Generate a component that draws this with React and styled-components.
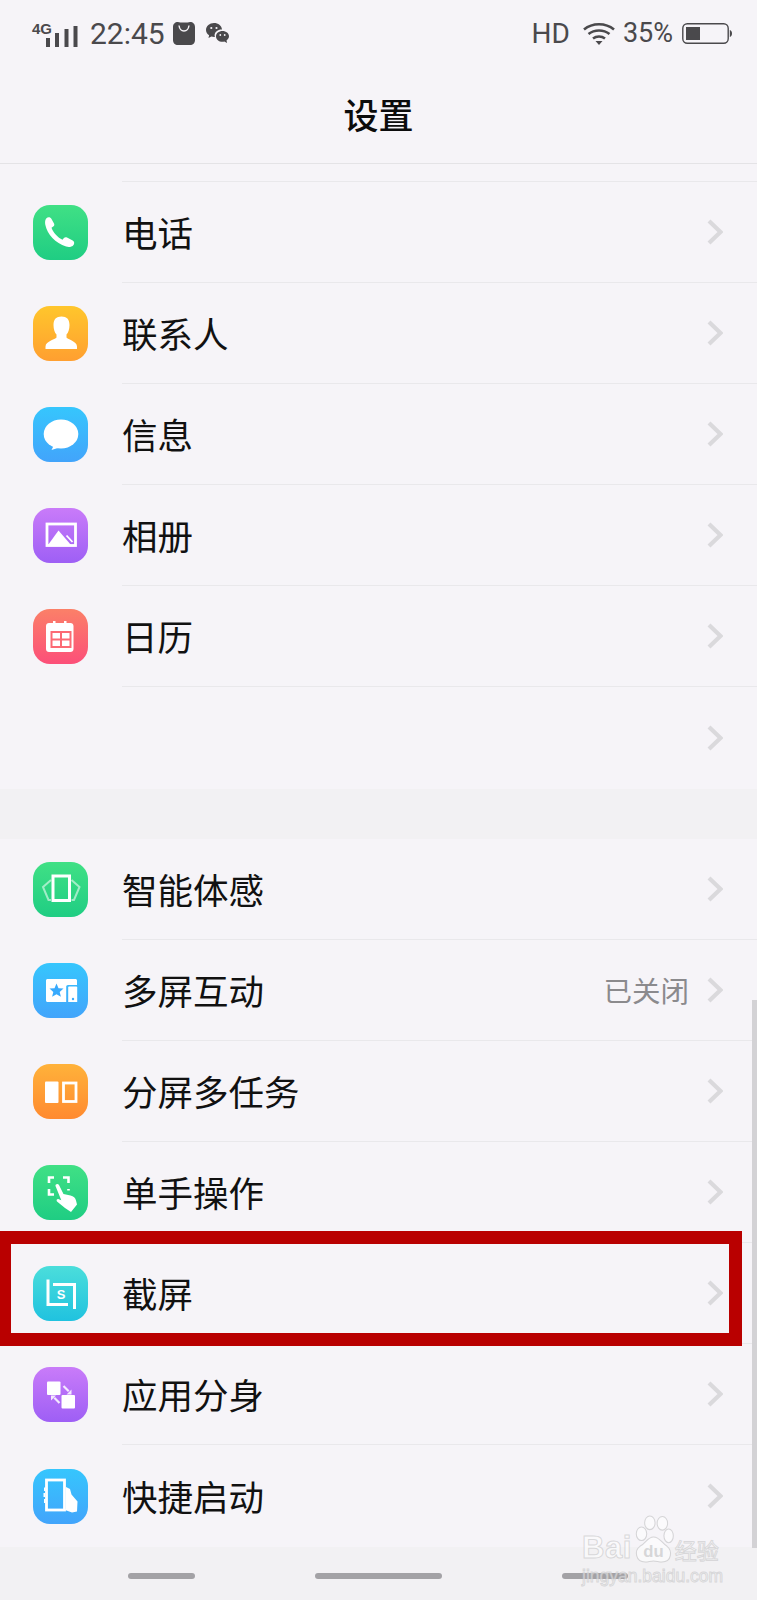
import React from "react";
import styled, { createGlobalStyle } from "styled-components";

const GlobalStyle = createGlobalStyle`
  html, body {
    margin: 0;
    padding: 0;
    background: #f6f4f8;
  }
  * {
    box-sizing: border-box;
  }
`;

const Page = styled.div`
  position: relative;
  width: 757px;
  height: 1600px;
  overflow: hidden;
  background: #f6f4f8;
  font-family: "Noto Sans CJK SC", "Noto Sans", sans-serif;
  color: #111;
`;

const StatusBar = styled.div`
  height: 66px;
  padding: 20px 25px 0 32px;
  display: flex;
  justify-content: space-between;
  align-items: flex-start;
  color: #4a494c;
  font-family: Roboto, "Liberation Sans", sans-serif;
`;

const StatusGroup = styled.div`
  display: flex;
  align-items: center;
  height: 27px;
`;

const Signal = styled.div`
  display: flex;
  align-items: flex-end;
  height: 24px;
  margin-top: 3px;
`;

const FourGLabel = styled.span`
  align-self: flex-start;
  width: 14px;
  font-family: "Liberation Sans", sans-serif;
  font-size: 15px;
  font-weight: 700;
  line-height: 11px;
  white-space: nowrap;
`;

const Clock = styled.span`
  font-size: 30px;
  line-height: 27px;
  margin: 0 8px 0 12px;
`;

const Network = styled.span`
  font-size: 28px;
  line-height: 27px;
`;

const Percent = styled.span`
  font-size: 27px;
  line-height: 27px;
  margin: 0 9px 0 8px;
`;

const Drawing = styled.svg`
  display: block;
  flex: none;
  margin-left: ${(p) => p.$ml || 0}px;
`;

const TitleBar = styled.div`
  height: 98px;
  padding-bottom: 2px;
  display: flex;
  align-items: center;
  justify-content: center;
  border-bottom: 1px solid #e4e3e6;
  font-size: 35px;
  font-weight: 500;
  color: #0c0c0c;
`;

const Stub = styled.div`
  height: 18px;
  margin-left: 122px;
  border-bottom: 1px solid #e9e8eb;
`;

const Row = styled.div`
  height: ${(p) => (p.$last ? 102 : 101)}px;
  display: flex;
  align-items: center;
  padding-left: 33px;
`;

const IconSlot = styled.div`
  width: 55px;
  height: 55px;
  flex: none;
  margin-right: 34px;
  border-radius: 17px;
  background: ${(p) => p.$bg || "transparent"};
  svg {
    display: block;
  }
`;

const RowBody = styled.div`
  flex: 1;
  height: 100%;
  display: flex;
  align-items: center;
  padding-right: 34px;
  border-bottom: ${(p) => (p.$last ? "none" : "1px solid #e9e8eb")};
`;

const Label = styled.div`
  flex: 1;
  font-size: 35.5px;
  line-height: 40px;
  color: #111;
`;

const Value = styled.div`
  font-size: 28.5px;
  line-height: 40px;
  color: #8b8a8d;
  margin-right: 18px;
`;

const Band = styled.div`
  height: 50px;
  background: #f2f1f3;
`;

const BottomBar = styled.div`
  height: 53px;
  background: #f2f1f3;
  padding: 26px 129px 0 128px;
  display: flex;
  justify-content: space-between;
  align-items: flex-start;
`;

const Pill = styled.div`
  width: ${(p) => p.$w}px;
  height: 6px;
  border-radius: 3px;
  background: #a3a2a5;
`;

const Scrollbar = styled.div`
  position: absolute;
  right: 0;
  top: 1000px;
  width: 5px;
  height: 548px;
  background: #d3d2d5;
`;

const Highlight = styled.div`
  position: absolute;
  left: 0;
  top: 1231px;
  width: 742px;
  height: 115px;
  border: 13px solid #b90000;
  border-left-width: 11px;
`;

const Watermark = styled.div`
  position: absolute;
  left: 582px;
  top: 1515px;
  font-family: "Liberation Sans", Arial, sans-serif;
  color: rgba(255, 255, 255, 0.55);
  -webkit-text-stroke: 1px rgba(190, 190, 192, 0.55);
  white-space: nowrap;
`;

const Wordmark = styled.div`
  display: flex;
  align-items: flex-end;
  height: 48px;
`;

const Bai = styled.span`
  font-size: 31px;
  line-height: 30px;
  font-weight: 700;
  letter-spacing: 0.5px;
`;

const Jingyan = styled.span`
  flex: none;
  font-family: "Noto Sans CJK SC", sans-serif;
  font-size: 22px;
  line-height: 28px;
`;

const Url = styled.div`
  margin-top: 3px;
  font-size: 17.5px;
  line-height: 20px;
`;

const Chevron = () => (
  <Drawing width="16" height="26" viewBox="0 0 16 26">
    <path d="M2 2l11.5 11L2 24" fill="none" stroke="#dad9dc" strokeWidth="4.2" />
  </Drawing>
);

const Glyph = ({ children }) => (
  <svg width="55" height="55" viewBox="0 0 55 55" fill="#fff">
    {children}
  </svg>
);

const icons = {
  phone: (
    <Glyph>
      <path d="M13.200 13.500c1.800-1.800 4.300-1.400 5.300.5l2.500 4.600c.6 1.100.3 2.300-.8 3l-1.700 1.100c1.900 5.100 6.300 9.800 11 12l1.400-1.600c.8-1 2-1.200 3.100-.6l5.700 3.100c1.900 1.100 2 3.500.4 4.800-1.700 1.500-4.300 1.900-7 1C22.500 38.400 14.200 29.500 12.300 19.800c-.4-2.400-.3-4.800.9-6.300z" />
    </Glyph>
  ),
  contact: (
    <Glyph>
      <path d="M28.500 10.500c5.200 0 8 2.800 8 8.500 0 4.200-1.300 7.800-3 9.500v3c0 1.500 10.500 3.500 10.500 9v2.500H12.500V40.500c0-5.500 11-7.500 11-9v-3c-1.700-1.700-3-5.300-3-9.500 0-5.700 2.800-8.500 8-8.500z" />
    </Glyph>
  ),
  message: (
    <Glyph>
      <ellipse cx="28" cy="27" rx="17.300" ry="14.500" />
      <path d="M21 38l-2.500 5 8-2.500z" />
    </Glyph>
  ),
  album: (
    <Glyph>
      <rect x="14" y="16" width="28.500" height="21.500" fill="none" stroke="#fff" strokeWidth="2.800" />
      <path d="M15 37l10.500-14.500L38 37z" />
      <path d="M33.500 27.500l6 6.500" stroke="#fff" strokeWidth="1.800" />
    </Glyph>
  ),
  calendar: (
    <Glyph>
      <path d="M13 17c0-1.700 1.300-3 3-3h4v-2h2.500v2h8.500v-2h2.500v2h4c1.700 0 3 1.300 3 3v23c0 1.700-1.300 3-3 3H16c-1.700 0-3-1.300-3-3z" />
      <path d="M17.500 22h21v17h-21z" fill="#fc6a74" />
      <path d="M19.500 24h7.500v5.500h-7.500zM29 24h7.500v5.500H29zM19.500 31.500h7.500V37h-7.500zM29 31.500h7.500V37H29z" />
    </Glyph>
  ),
  motion: (
    <Glyph>
      <path d="M18 18l-8 7 5.500 13H18M38.500 18l8 7-5.500 13h-2.500" fill="none" stroke="#fff" strokeOpacity=".55" strokeWidth="2" />
      <rect x="20" y="14" width="16.500" height="24.500" fill="none" stroke="#fff" strokeWidth="3" />
    </Glyph>
  ),
  multi: (
    <Glyph>
      <path d="M13 17.500c0-.800.700-1.500 1.500-1.500h28c.800 0 1.500.700 1.500 1.500v4.500h-9c-1 0-1.800.800-1.800 1.800V39H14.500c-.800 0-1.500-.700-1.500-1.500z" />
      <path d="M35.200 24.500c0-.500.400-1 1-1H43.500c.300 0 .700.400.700 1V39h-9z" />
      <path d="M23.500 20.500l2 4.700 5 .4-3.800 3.300 1.200 4.900-4.400-2.600-4.400 2.600 1.200-4.900-3.800-3.300 5-.4z" fill="#38aafd" />
      <circle cx="40" cy="36" r="1.200" fill="#38aafd" />
    </Glyph>
  ),
  split: (
    <Glyph>
      <rect x="12" y="17.500" width="13.500" height="21.500" rx="1" />
      <rect x="30.500" y="19" width="12.500" height="18.500" fill="none" stroke="#fff" strokeWidth="2.800" />
    </Glyph>
  ),
  onehand: (
    <Glyph>
      <path d="M21 12.500h-5v5.500M30 12.500h5.500v5.500M16 24v5.500h5M35.500 24v1.500" fill="none" stroke="#fff" strokeWidth="2.600" />
      <path d="M22.500 21c-.5-2 2.500-3 3.500-1l4.500 9 7 1.500c3 .7 5 2.500 5.500 5l1 4-6 7.500-6-4-8-6.500c-1-1.200 0-3 1.800-2.300l2.500 1z" />
    </Glyph>
  ),
  screenshot: (
    <Glyph>
      <path d="M15 13.500V38.500H35" fill="none" stroke="#fff" strokeWidth="3" />
      <path d="M20 18.500h21.500V43" fill="none" stroke="#fff" strokeWidth="3" />
      <text x="28" y="33" textAnchor="middle" fontSize="13" fontWeight="700" fontFamily="Liberation Sans, sans-serif">
        S
      </text>
    </Glyph>
  ),
  clone: (
    <Glyph>
      <rect x="14" y="14.500" width="13.500" height="13.500" rx="1" />
      <rect x="28.500" y="28" width="13.500" height="13.500" rx="1" />
      <path d="M30.500 19l5.200 5.200" stroke="#fff" strokeOpacity=".85" strokeWidth="2.200" />
      <path d="M38.500 27.500v-5l-5 5zM18 28.500v5l5-5z" fillOpacity=".85" />
      <path d="M26.500 36l-5.200-5.200" stroke="#fff" strokeOpacity=".85" strokeWidth="2.200" />
    </Glyph>
  ),
  quick: (
    <Glyph>
      <rect x="13.500" y="11" width="18" height="30" fill="none" stroke="#fff" strokeWidth="2.800" />
      <path d="M33 18l4 2 1.500 5.500 6 7-.5 10-5 1-7-2.500-1.500-.5H33zM11 18.500h1.500V22H11zM10.500 24H12v4h-1.500zM11 30h1.500v4H11z" />
    </Glyph>
  ),
};

const gradients = {
  green: "linear-gradient(#40e085, #1fcd83)",
  amber: "linear-gradient(#ffc62c, #ff9f30)",
  blue: "linear-gradient(#36c6fd, #42a4fb)",
  purple: "linear-gradient(#c97bf9, #9e5ff5)",
  rose: "linear-gradient(#fb8068, #fc4f79)",
  orange: "linear-gradient(#ffb23a, #ff8a30)",
  teal: "linear-gradient(#4bdedb, #20c2df)",
};

const firstSection = [
  { label: "电话", icon: "phone", bg: gradients.green },
  { label: "联系人", icon: "contact", bg: gradients.amber },
  { label: "信息", icon: "message", bg: gradients.blue },
  { label: "相册", icon: "album", bg: gradients.purple },
  { label: "日历", icon: "calendar", bg: gradients.rose },
  { label: "" },
];

const secondSection = [
  { label: "智能体感", icon: "motion", bg: gradients.green },
  { label: "多屏互动", icon: "multi", bg: gradients.blue, value: "已关闭" },
  { label: "分屏多任务", icon: "split", bg: gradients.orange },
  { label: "单手操作", icon: "onehand", bg: gradients.green },
  { label: "截屏", icon: "screenshot", bg: gradients.teal },
  { label: "应用分身", icon: "clone", bg: gradients.purple },
  { label: "快捷启动", icon: "quick", bg: gradients.blue },
];

function SettingsRow({ item, last }) {
  return (
    <Row $last={last}>
      <IconSlot $bg={item.bg}>{item.icon && icons[item.icon]}</IconSlot>
      <RowBody $last={last}>
        <Label>{item.label}</Label>
        {item.value && <Value>{item.value}</Value>}
        <Chevron />
      </RowBody>
    </Row>
  );
}

function Section({ items }) {
  return items.map((item, i) => <SettingsRow key={i} item={item} last={i === items.length - 1} />);
}

const SignalBars = () => (
  <Drawing width="32" height="21" viewBox="0 0 32 21">
    <path d="M0 12h4v9H0zM9 7h4v14H9zM18.500 3h4v18h-4zM27.500 0h4v21h-4z" fill="#4a494c" />
  </Drawing>
);

const BagIcon = () => (
  <Drawing width="22" height="23" viewBox="0 0 22 23">
    <path d="M5 0c2 .8 10 .8 12 0 3 0 5 2 5 5v13c0 3-2 5-5 5H5c-3 0-5-2-5-5V5c0-3 2-5 5-5z" fill="#4a494c" />
    <path d="M6 3.500c.5 3.500 2.500 5.500 5 5.500s4.500-2 5-5.500" fill="none" stroke="#f6f4f8" strokeWidth="1.400" />
  </Drawing>
);

const WeChatIcon = () => (
  <Drawing $ml={11} width="23" height="22" viewBox="0 0 23 22">
    <path d="M8 0c4.200 0 7.600 2.700 8 6.400-3.900-.2-7.400 2.300-7.400 5.900 0 .6.100 1.100.3 1.700-1.300.1-2.400 0-3.500-.4L2.500 15l.6-2.800C1.200 11 0 9.100 0 7c0-3.900 3.600-7 8-7z" fill="#4a494c" />
    <path d="M16.500 8c3.600 0 6.500 2.300 6.500 5.200 0 1.700-1 3.200-2.500 4.200l.6 2.600-2.800-1.500c-.6.100-1.200.2-1.800.2-3.600 0-6.500-2.300-6.500-5.300S12.900 8 16.500 8z" fill="#4a494c" />
    <circle cx="5.300" cy="5" r="1.100" fill="#f6f4f8" />
    <circle cx="10.500" cy="5" r="1.100" fill="#f6f4f8" />
    <circle cx="14.300" cy="12" r=".9" fill="#f6f4f8" />
    <circle cx="18.700" cy="12" r=".9" fill="#f6f4f8" />
  </Drawing>
);

const WifiIcon = () => (
  <Drawing $ml={13} width="32" height="23" viewBox="0 0 32 23">
    <g fill="none" stroke="#4a494c" strokeWidth="2.600">
      <path d="M1 7.500C9.500.5 22.500.5 31 7.500" />
      <path d="M5.500 12C11.500 7.300 20.500 7.300 26.500 12" />
      <path d="M10 16.500c3.500-2.700 8.500-2.700 12 0" />
    </g>
    <path d="M12.500 19h7L16 23z" fill="#4a494c" />
  </Drawing>
);

const BatteryIcon = () => (
  <Drawing width="50" height="21" viewBox="0 0 50 21">
    <rect x=".8" y=".8" width="45.400" height="19.400" rx="4.500" fill="none" stroke="#4a494c" strokeWidth="1.400" />
    <rect x="4" y="4" width="14" height="13" fill="#4a494c" />
    <path d="M47.800 7c1.400.5 2.200 1.900 2.200 3.500s-.8 3-2.200 3.500z" fill="#4a494c" />
  </Drawing>
);

const Paw = () => (
  <Drawing width="43" height="48" viewBox="0 0 39 46">
    <g fill="rgba(255,255,255,0.55)" stroke="rgba(190,190,192,0.6)">
      <ellipse cx="8" cy="18" rx="5" ry="6.500" />
      <ellipse cx="16" cy="7.500" rx="5" ry="6.500" />
      <ellipse cx="28" cy="8" rx="5" ry="6.500" />
      <ellipse cx="34" cy="20" rx="4.500" ry="6.500" />
      <path d="M19.500 21c6 0 7 5 13 9 5 4 5 15-5 15-3 0-5-1-8-1s-5 1-8 1C2 45 1 34 6.500 30c6-3 7-9 13-9z" />
    </g>
    <text x="19.500" y="40" textAnchor="middle" fontSize="16" fontWeight="700" fill="rgba(210,210,212,0.9)" stroke="none" fontFamily="Liberation Sans, sans-serif">
      du
    </text>
  </Drawing>
);

export default function App() {
  return (
    <Page>
      <GlobalStyle />
      <StatusBar>
        <StatusGroup>
          <Signal>
            <FourGLabel>4G</FourGLabel>
            <SignalBars />
          </Signal>
          <Clock>22:45</Clock>
          <BagIcon />
          <WeChatIcon />
        </StatusGroup>
        <StatusGroup>
          <Network>HD</Network>
          <WifiIcon />
          <Percent>35%</Percent>
          <BatteryIcon />
        </StatusGroup>
      </StatusBar>
      <TitleBar>设置</TitleBar>
      <Stub />
      <Section items={firstSection} />
      <Band />
      <Section items={secondSection} />
      <BottomBar>
        <Pill $w={67} />
        <Pill $w={127} />
        <Pill $w={66} />
      </BottomBar>
      <Scrollbar />
      <Highlight />
      <Watermark>
        <Wordmark>
          <Bai>Bai</Bai>
          <Paw />
          <Jingyan>经验</Jingyan>
        </Wordmark>
        <Url>jingyan.baidu.com</Url>
      </Watermark>
    </Page>
  );
}
